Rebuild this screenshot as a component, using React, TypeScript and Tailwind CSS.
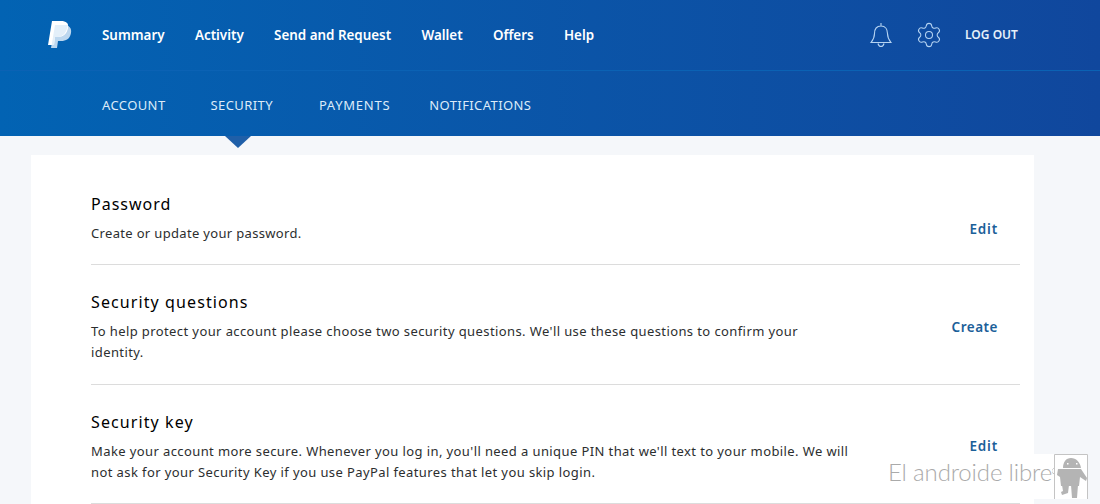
import { Settings } from "lucide-react";

const mainLinks = ["Summary", "Activity", "Send and Request", "Wallet", "Offers", "Help"];

function Logo() {
  return (
    <svg width="24" height="30" viewBox="0 0 24 30" className="shrink-0">
      <path d="M7 5h9c5 0 8 3 7 8-1 6-5 8-10 8h-3l-1 7H3z" fill="#bcd7ef" />
      <path d="M4 1h9c5 0 8 2 7 7-1 6-5 9-10 9H7l-1 8H0z" fill="#ffffff" />
      <path d="M7 5h12.800C19 12 15 17 10 17H7l-1 8H3.700z" fill="#e3eff9" />
    </svg>
  );
}

function Bell() {
  return (
    <svg width="24" height="26" viewBox="0 0 24 26" fill="none" stroke="#b5d3f2" strokeWidth="1.1">
      <path d="M12 1v3M12 4c-4.500 0-6.500 3.500-6.500 7.500 0 4-1 6-3.500 9h20c-2.500-3-3.500-5-3.500-9C18.500 7.500 16.500 4 12 4z" />
      <path d="M9 21.500c.5 2 1.500 3 3 3s2.500-1 3-3" />
    </svg>
  );
}

function AndroidMark() {
  return (
    <svg width="36" height="45" viewBox="0 0 36 45" className="shrink-0">
      <path d="M2.500 45V.5h33V45" fill="#ffffff" stroke="#c4c4c4" />
      <path d="M2.500 14C0 15-1 17 .5 19l2 1" fill="none" stroke="#c4c4c4" />
      <g fill="#b4b4b4">
        <path d="M11 14c0-6 3-10 8-10s9 4 10 10z" />
        <path d="M6 15h23l6 9-1 3-6-4-1 9H9l-1-9-3-2z" />
        <path d="M10 31h7l-1 8-6 2-1-3 2-1zM19 31h7l-1 13h-5z" />
      </g>
      <path d="M15 9h1.500v1.500H15zM24 9h1.500v1.500H24z" fill="#ffffff" />
    </svg>
  );
}

export default function App() {
  return (
    <div className="relative h-[504px] w-[1100px] overflow-hidden bg-[#f5f7fa] font-['Noto_Sans',sans-serif]">
      <header className="relative h-[136px] bg-gradient-to-r from-[#0263b3] to-[#10479d]">
        <div className="flex h-[71px] items-center border-b border-[#0b62b4] pl-[48px]">
          <Logo />
          <nav className="ml-[30px] flex gap-[30.3px] text-[13.4px] font-semibold text-white">
            {mainLinks.map((link) => (
              <a key={link}>{link}</a>
            ))}
          </nav>
          <div className="ml-[275px] flex items-center">
            <Bell />
            <Settings size={28} strokeWidth={0.9} color="#b5d3f2" className="ml-[22px]" />
            <a className="ml-[22px] text-[12px] font-semibold text-[#e6f0fa]">LOG OUT</a>
          </div>
        </div>
        <nav className="flex h-[65px] items-center pl-[102px] pt-[4px] text-[13px] tracking-[0.4px] text-[#dcebf9]">
          <a>ACCOUNT</a>
          <a className="ml-[45px]">SECURITY</a>
          <a className="ml-[46px] tracking-[0.75px]">PAYMENTS</a>
          <a className="ml-[39px]">NOTIFICATIONS</a>
        </nav>
        <div className="absolute left-[225px] top-[136px] h-0 w-0 border-x-[13px] border-t-[12px] border-x-transparent border-t-[#1f5fa8]" />
      </header>

      <main className="ml-[31px] mt-[19px] h-[400px] w-[1003px] bg-white pl-[60px] pr-[14px] pt-[38px] text-[13px] tracking-[0.4px] text-[#2c2e2f]">
        <section className="flex h-[72px] items-start justify-between border-b border-[#dcdcdc]">
          <div>
            <h2 className="text-[16px] leading-[22px] tracking-[1px] text-black">Password</h2>
            <p className="mt-[9px] leading-[18px] tracking-[0.33px]">Create or update your password.</p>
          </div>
          <a className="mr-[22px] mt-[26px] text-[13.5px] font-semibold tracking-[0.8px] text-[#1b6099]">Edit</a>
        </section>

        <section className="flex h-[120px] items-start justify-between border-b border-[#dcdcdc] pt-[26px]">
          <div className="w-[720px]">
            <h2 className="text-[16px] leading-[22px] tracking-[1.1px] text-black">Security questions</h2>
            <p className="mt-[8px] leading-[21px]">
              To help protect your account please choose two security questions. We'll use these questions to confirm your identity.
            </p>
          </div>
          <a className="mr-[22px] mt-[26px] text-[13.5px] font-semibold tracking-[0.5px] text-[#1b6099]">Create</a>
        </section>

        <section className="flex h-[119px] items-start justify-between border-b border-[#dcdcdc] pt-[26px]">
          <div className="w-[770px]">
            <h2 className="text-[16px] leading-[22px] tracking-[1.1px] text-black">Security key</h2>
            <p className="mt-[8px] leading-[21px]">
              Make your account more secure. Whenever you log in, you'll need a unique PIN that we'll text to your mobile. We will not ask for your Security Key if you use PayPal features that let you skip login.
            </p>
          </div>
          <a className="mr-[22px] mt-[25px] text-[13.5px] font-semibold tracking-[0.8px] text-[#1b6099]">Edit</a>
        </section>
      </main>

      <div className="absolute left-[885px] top-[454px] flex h-[45px] w-[203px] items-center justify-between bg-white">
        <span className="whitespace-nowrap pb-[10px] pl-[3px] font-['Lato',sans-serif] text-[24px] font-light tracking-[-0.15px] text-[#aaaaaa]">El androide libre</span>
        <AndroidMark />
      </div>
    </div>
  );
}
